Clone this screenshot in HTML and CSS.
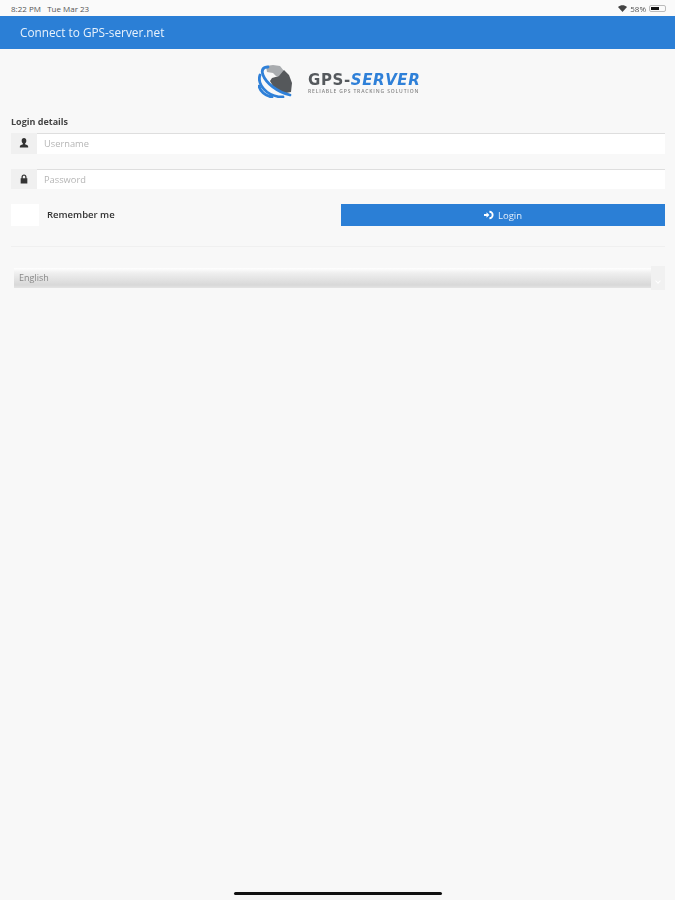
FILE: index.html
```html
<!DOCTYPE html>
<html>
<head>
    <title>Connect to GPS-server.net</title>
    <link rel="stylesheet" href="styles.css">
</head>
<body>
    <div class="status-bar">
        <span class="status-time">8:22 PM &nbsp; Tue Mar 23</span>
        <span class="status-right">
            <svg class="wifi" viewBox="0 0 12 9"><path d="M6 9 0 2.600C3.400-.6 8.600-.6 12 2.600z"/></svg>
            <span>58%</span>
            <span class="battery"><span class="battery-fill"></span></span>
        </span>
    </div>
    <div class="app-header">Connect to GPS-server.net</div>

    <div class="logo">
        <svg class="logo-globe" viewBox="0 0 34 33">
            <path class="globe-top" d="M8 1 15 0 22 1 26 6 23 11 18 11 15 8 9 7z"/>
            <path class="globe-land" d="M14 13 21 11 26 5 31 10 34 18 33 27 28 28 21 26 15 21 12 16z"/>
            <path class="globe-band" d="M10 2C5 2 3 5 5 10 8 18 19 27 32 30"/>
            <path class="globe-band" d="M2 10C0 16 3 22 9 27 13 30 19 32 25 32"/>
            <path class="globe-band" d="M1 21C2 26 7 31 14 32"/>
        </svg>
        <div class="logo-text">
            <div class="logo-name">GPS-<span class="logo-blue">SERVER</span></div>
            <div class="logo-tag">RELIABLE GPS TRACKING SOLUTION</div>
        </div>
    </div>

    <div class="login-form">
        <div class="form-title">Login details</div>

        <div class="input-row">
            <span class="input-icon">
                <svg viewBox="0 0 12 12"><path d="M6 0C7.800 0 8.800 1.400 8.800 3.200 8.800 4.800 8 6 7.300 6.600V7.600C9 8.200 11 8.800 11 10.200V11.500H1V10.200C1 8.800 3 8.200 4.700 7.600V6.600C4 6 3.200 4.800 3.200 3.200 3.200 1.400 4.200 0 6 0z"/></svg>
            </span>
            <input class="text-input" type="text" placeholder="Username">
        </div>

        <div class="input-row">
            <span class="input-icon">
                <svg viewBox="0 0 12 12"><path d="M3 5V3.600C3 1.600 4.300.5 6 .5S9 1.600 9 3.600V5H10V11.500H2V5zM4.500 5H7.500V3.600C7.500 2.600 6.900 2 6 2S4.500 2.600 4.500 3.600z"/></svg>
            </span>
            <input class="text-input" type="password" placeholder="Password">
        </div>

        <div class="login-row">
            <div class="remember">
                <span class="checkbox"></span>
                <span class="remember-label">Remember me</span>
            </div>
            <button class="btn-login">
                <svg viewBox="0 0 12 12"><path d="M6.500 1A5 5 0 1 1 6.500 11V8.800A2.800 2.800 0 1 0 6.500 3.200zM0 4.700H3V2.800L6.500 6 3 9.200V7.300H0z"/></svg>
                Login
            </button>
        </div>

        <div class="divider"></div>

        <div class="language">
            <span class="language-value">English</span>
            <span class="language-arrow"></span>
        </div>
    </div>

    <div class="home-indicator"></div>
</body>
</html>
```

FILE: styles.css
```css
html, body {
    height: 100%;
}
body {
    margin: 0;
    background: #f8f8f8;
    font-family: "Open Sans", sans-serif;
    display: flex;
    flex-direction: column;
    overflow: hidden;
    filter: blur(.4px);
}
.status-bar {
    height: 16px;
    flex: none;
    background: #fafafa;
    display: flex;
    align-items: center;
    justify-content: space-between;
    padding: 0 9px 0 11px;
    font-size: 8px;
    color: #555;
}
.status-right {
    display: flex;
    align-items: center;
    gap: 3px;
}
.wifi {
    width: 9px;
    height: 7px;
    fill: #444;
}
.battery {
    width: 17px;
    height: 7px;
    box-sizing: border-box;
    border: 1px solid #bbb;
    border-radius: 2px;
    display: block;
    padding: 1px;
}
.battery-fill {
    display: block;
    width: 60%;
    height: 100%;
    background: #111;
}
.app-header {
    height: 33px;
    flex: none;
    box-sizing: border-box;
    background: #2b7fd6;
    color: #e8f2fc;
    font-size: 11.800px;
    line-height: 33px;
    padding-left: 20px;
}
.logo {
    flex: none;
    display: flex;
    justify-content: center;
    align-items: center;
    gap: 16px;
    padding: 16px 0 0 3px;
    height: 33px;
}
.logo-globe {
    width: 34px;
    height: 33px;
}
.globe-top {
    fill: #a9acaf;
}
.globe-land {
    fill: #55585b;
}
.globe-band {
    fill: none;
    stroke: #2f80d8;
    stroke-width: 2.800;
    stroke-linecap: round;
}
.logo-text {
    width: 112px;
    padding-top: 5px;
}
.logo-name {
    font-family: "DejaVu Sans", sans-serif;
    font-size: 15px;
    font-weight: bold;
    line-height: 15px;
    letter-spacing: .6px;
    color: #55595d;
    white-space: nowrap;
}
.logo-blue {
    color: #2f80d8;
    font-style: italic;
}
.logo-tag {
    font-size: 5px;
    line-height: 7px;
    font-weight: 600;
    letter-spacing: .85px;
    color: #858585;
    white-space: nowrap;
}
.login-form {
    padding: 18px 10px 0 11px;
}
.form-title {
    font-size: 9px;
    font-weight: 700;
    color: #444;
    line-height: 12px;
    margin-bottom: 5px;
}
.input-row {
    display: flex;
    height: 20.500px;
    margin-bottom: 15px;
}
.input-icon {
    width: 26px;
    flex: none;
    background: #f0f0f0;
    display: flex;
    align-items: center;
    justify-content: center;
}
.input-icon svg {
    width: 10px;
    height: 10px;
    fill: #333;
}
.text-input {
    flex: 1;
    min-width: 0;
    box-sizing: border-box;
    border: none;
    border-top: 1px solid #dedede;
    background: #fff;
    padding: 0 7px;
    font-family: "Open Sans", sans-serif;
    font-size: 9.300px;
    outline: none;
}
.text-input::placeholder {
    color: #b5b5b5;
}
.login-row {
    display: flex;
    justify-content: space-between;
    align-items: flex-start;
}
.remember {
    display: flex;
    align-items: center;
    gap: 8px;
}
.checkbox {
    width: 28px;
    height: 22px;
    background: #fff;
}
.remember-label {
    font-size: 9.500px;
    font-weight: 600;
    color: #333;
    padding-bottom: 2px;
}
.btn-login {
    width: 324px;
    height: 22px;
    border: none;
    background: #2b7fd6;
    color: #e3eefa;
    font-family: "Open Sans", sans-serif;
    font-size: 9.500px;
    display: flex;
    align-items: center;
    justify-content: center;
    gap: 4px;
    padding: 0;
}
.btn-login svg {
    width: 10px;
    height: 10px;
    fill: #fff;
}
.divider {
    height: 1px;
    background: #f0f0f0;
    margin: 20px 0 21px;
}
.language {
    display: flex;
    height: 20px;
    margin-left: 3px;
    background: linear-gradient(#fff 0%, #efefef 25%, #d8d8d8 85%, #e4e4e4 100%);
}
.language-value {
    flex: 1;
    font-size: 9px;
    line-height: 19px;
    padding-left: 5px;
    color: #888;
}
.language-arrow {
    width: 14px;
    margin: -2px 0;
    background: #f1f1f1;
    text-align: center;
}
.language-arrow::after {
    content: "";
    display: inline-block;
    width: 3px;
    height: 3px;
    margin-top: 7px;
    border-right: 1px solid #fff;
    border-bottom: 1px solid #fff;
    transform: rotate(45deg);
}
.home-indicator {
    width: 208px;
    height: 3px;
    flex: none;
    margin: auto auto 5px;
    background: #111;
    border-radius: 2px;
}
```
